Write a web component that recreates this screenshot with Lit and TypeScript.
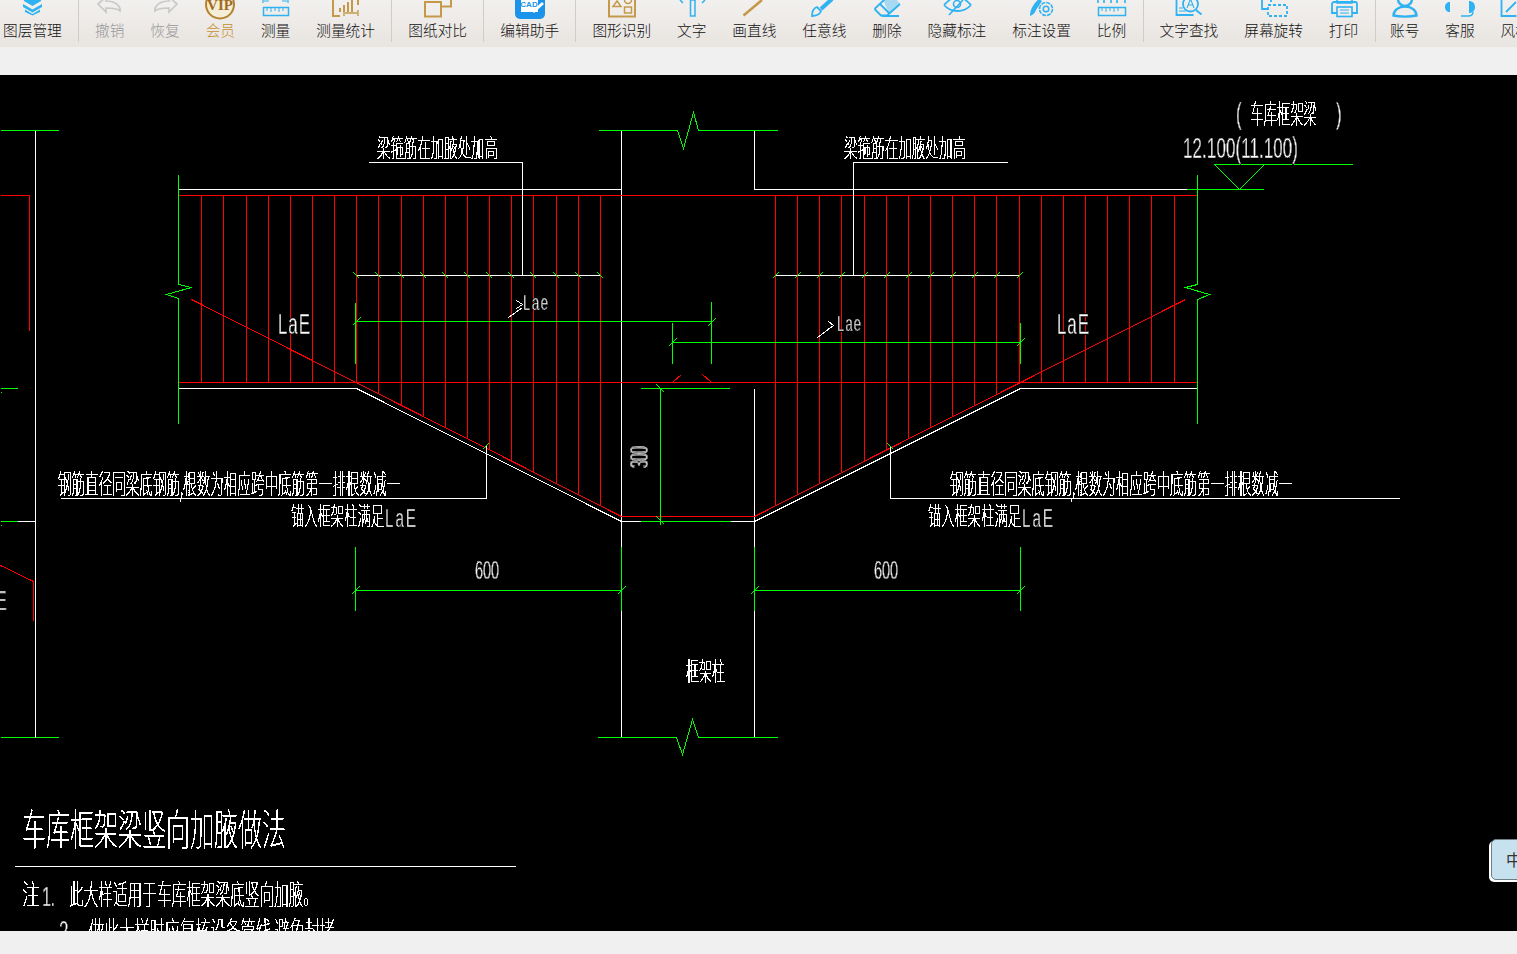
import { LitElement, html, svg, css } from "lit";
import { customElement } from "lit/decorators.js";

const B = "#2fb2f2";
const G = "#c49a4a";
const H = "#c9c9c9";

type Item = { label: string; cx: number; tone?: string; icon: unknown };

const ruler = (a: number, b: number) => svg`
  <rect x=${a + 0.5} y="7.5" width=${b - a - 1} height="8" fill="none" stroke=${B} stroke-width="1.5"/>
  <path d="M${a + 4} 8v3M${a + 8} 8v4M${a + 12} 8v3M${a + 16} 8v4M${a + 20} 8v3" stroke=${B} stroke-width="1"/>`;

const groups: Item[][] = [
  [{ label: "图层管理", cx: 32, icon: svg`<g fill=${B}><path d="M24 -2h17v3l-8.500 5-8.500-5z"/><path d="M23 4l9.500 5.500L42 4v3l-9.500 5.500L23 7z"/><path d="M25 9.500l7.500 4.500 7.500-4.500v2.500l-7.500 3.500-7.500-3.500z"/></g>` }],
  [
    { label: "撤销", tone: "off", cx: 109, icon: svg`<path d="M97 4l8-7v4c9 0 15 5 14 10-3-3-8-3-14-3v4z" fill="none" stroke=${H} stroke-width="1.700"/>` },
    { label: "恢复", tone: "off", cx: 164, icon: svg`<path d="M176 4l-8-7v4c-9 0-15 5-14 10 3-3 8-3 14-3v4z" fill="none" stroke=${H} stroke-width="1.700"/>` },
    { label: "会员", tone: "gold", cx: 220, icon: svg`<circle cx="220" cy="4.500" r="14" fill="#f4edd8" stroke="#b5822c" stroke-width="2"/><text x="220" y="10" text-anchor="middle" class="viptext">VIP</text>` },
    { label: "测量", cx: 275, icon: svg`${ruler(262, 288)}<path d="M262 0v3M287 0v3M263 1h5M281 1h5" stroke=${B} stroke-width="1.200"/>` },
    { label: "测量统计", cx: 345, icon: svg`<path d="M332 -1v17h7M357 -1v6" fill="none" stroke=${G} stroke-width="2"/><path d="M338 12h2V8h-2zM342 12h2V5h-2zM346 12h2V2h-2zM350 12h2V0h-2z" fill=${G}/><path d="M343 10v6M357 10v6M344 13h12" stroke=${G} stroke-width="1.400"/>` },
  ],
  [{ label: "图纸对比", cx: 437, icon: svg`<rect x="424" y="2" width="16" height="14.500" fill="none" stroke=${G} stroke-width="2"/><path d="M440 6.500h10V-3" fill="none" stroke=${G} stroke-width="2"/>` }],
  [{ label: "编辑助手", cx: 529, icon: svg`<path d="M514 -4h30v18a5 5 0 0 1-5 5h-20a5 5 0 0 1-5-5z" fill="#1b93ea"/><rect x="520" y="-2" width="17" height="14" fill="#fff"/><text x="528" y="7" text-anchor="middle" class="cad">CAD</text><path d="M542 3l-10 9" stroke="#fff" stroke-width="3"/>` }],
  [
    { label: "图形识别", cx: 621, icon: svg`<path d="M608 -2v18.500h26V-2" fill="none" stroke=${G} stroke-width="2"/><path d="M616 1l4 5.500h-8z" fill="none" stroke=${G} stroke-width="1.500"/><circle cx="627" cy="0" r="3.500" fill="none" stroke=${G} stroke-width="1.500"/><rect x="623.500" y="7" width="7" height="6" fill="none" stroke=${G} stroke-width="1.500"/>` },
    { label: "文字", cx: 691, icon: svg`<path d="M689.500 0h4.500v16h-4.500z" fill="none" stroke=${B} stroke-width="1.500"/><path d="M679 0l3 3M704 0l-3 3" stroke=${B} stroke-width="1.500"/>` },
    { label: "画直线", cx: 754, icon: svg`<path d="M743.500 15.500L762 0" stroke=${G} stroke-width="2.600"/>` },
    { label: "任意线", cx: 824, icon: svg`<path d="M821 9L832 -1" stroke=${B} stroke-width="4"/><path d="M812 16c0-5 2-8 5-9l4 4c-1 3-5 5-9 5z" fill="none" stroke=${B} stroke-width="1.800"/>` },
    { label: "删除", cx: 886, icon: svg`<path d="M882 0h14l3 4-11 9z" fill="#a8d9f3"/><path d="M873.500 9L884 -1M899 4L886 15.500H880L873.500 9M879 4l9 9M881 16h17" fill="none" stroke=${B} stroke-width="1.800"/>` },
    { label: "隐藏标注", cx: 956, icon: svg`<path d="M943 5c7 8 20 8 27 0M943 5c3-3 5-5 7-6M970 5c-3-3-5-5-7-6" fill="none" stroke=${B} stroke-width="1.800"/><circle cx="956" cy="4" r="3.500" fill="none" stroke=${B} stroke-width="1.600"/><path d="M948 15L962 0" stroke=${B} stroke-width="1.600"/>` },
    { label: "标注设置", cx: 1041, icon: svg`<path d="M1029 16c0-6 3-12 9-17l3 2-6 9c-1 3-3 5-6 6z" fill=${B}/><circle cx="1045" cy="9" r="6.500" fill="#eeebe8" stroke=${B} stroke-width="1.600" stroke-dasharray="4 1"/><circle cx="1045" cy="9" r="2.800" fill="none" stroke=${B} stroke-width="1.500"/>` },
    { label: "比例", cx: 1111, icon: svg`${ruler(1097, 1125)}<path d="M1097 0v3M1103 0v3M1110 0v3M1116 0v3M1124 0v3" stroke=${B} stroke-width="1.600"/>` },
  ],
  [
    { label: "文字查找", cx: 1188, icon: svg`<path d="M1175.500 -1v16h17" fill="none" stroke=${B} stroke-width="1.800"/><circle cx="1189.500" cy="4" r="7.500" fill="none" stroke=${B} stroke-width="1.800"/><path d="M1195 10l5.500 4.500" stroke=${B} stroke-width="2"/><path d="M1186 8l3.500-9 3.500 9M1187 5h5" fill="none" stroke=${B} stroke-width="1.100"/><path d="M1178 8h4M1178 11h7" stroke=${B} stroke-width="1"/>` },
    { label: "屏幕旋转", cx: 1273, icon: svg`<path d="M1261 -1v10h6M1270 -1v3" fill="none" stroke=${B} stroke-width="1.800"/><rect x="1267" y="5" width="19" height="11" fill="none" stroke=${B} stroke-width="1.800" stroke-dasharray="3 2"/>` },
    { label: "打印", cx: 1343, icon: svg`<path d="M1336 -1v4h15v-4" fill="none" stroke=${B} stroke-width="1.600"/><path d="M1336 13h-5V4c0-1 1-2 2-2h21c1 0 2 1 2 2v9h-5" fill="none" stroke=${B} stroke-width="1.800"/><rect x="1336" y="7" width="15" height="9.500" fill="none" stroke=${B} stroke-width="1.600"/><path d="M1339 10h9M1339 13h9" stroke=${B} stroke-width="1"/>` },
  ],
  [
    { label: "账号", cx: 1405, icon: svg`<circle cx="1405" cy="-1" r="7" fill="none" stroke=${B} stroke-width="2.500"/><path d="M1393.500 15.500c0-5 5-9 11.500-9s11.500 4 11.500 9c-6 1.500-17 1.500-23 0z" fill="none" stroke=${B} stroke-width="2.400"/>` },
    { label: "客服", cx: 1460, icon: svg`<path d="M1450 2c-3 0-5 2-5 5s2 5 5 5zM1469 1c3 0 6 2 6 6s-3 6-6 6z" fill=${B}/><path d="M1473 12c0 3-2 4-5 4h-7" fill="none" stroke=${B} stroke-width="1.500"/>` },
    { label: "风格", cx: 1515, icon: svg`<path d="M1501.500 -1v17h15" fill="none" stroke=${B} stroke-width="1.800"/><path d="M1506 12L1516 2" stroke=${B} stroke-width="1.800"/>` },
  ],
];

const ln = (c: string, ...p: number[]) => svg`<polyline class=${c} points=${p.join(" ")}/>`;

const cjk = (s: string, x0: number, x1: number, y0: number, y1: number) => {
  const fs = (y1 - y0) / 0.98;
  return svg`<text class="cjk" x=${x0} y=${y1 - fs * 0.1} font-size=${fs} textLength=${x1 - x0} lengthAdjust="spacingAndGlyphs">${s}</text>`;
};
const SX = 0.58;
const lat = (s: string, x0: number, x1: number, y0: number, y1: number) => {
  const fs = (y1 - y0) / 0.72;
  return svg`<text class="lat" transform="translate(${x0} ${y1}) scale(${SX} 1)" font-size=${fs} textLength=${(x1 - x0) / SX} lengthAdjust="spacing">${s}</text>`;
};

const slash = (x: number, y: number, r = 4) => ln("g", x - r, y + r, x + r, y - r);
const back = (x: number, y: number, r = 3) => ln("g", x - r, y - r, x + r, y + r);

const leftBars = [201, 223, 246, 268, 290, 312, 334, 356, 378, 401, 423, 445, 467, 489, 511, 533, 556, 578, 600];
const rightBars = [775, 797, 819, 841, 864, 886, 908, 930, 952, 974, 996, 1019, 1041, 1063, 1085, 1107, 1129, 1151, 1174];
const leftTicks = leftBars.filter((x) => x >= 356);
const rightTicks = rightBars.filter((x) => x <= 1019);

const drawing = svg`
  <defs>
    <filter id="crisp" x="0" y="0" width="100%" height="100%" color-interpolation-filters="sRGB">
      <feComponentTransfer><feFuncA type="discrete" tableValues="0 1 1 1 1"/></feComponentTransfer>
    </filter>
  </defs>
  <g transform="translate(.5 .5)">
    ${ln("r", 0, 195, 29, 195, 29, 330)}
    ${ln("g", 0, 130, 58, 130)}${ln("g", 0, 737, 58, 737)}
    ${ln("w", 35, 130, 35, 737)}
    ${ln("g", 0, 388, 17, 388)}${ln("g", 0, 392, 1, 392)}
    ${ln("g", 0, 521, 17, 521)}${ln("w", 17, 521, 35, 521)}${ln("g", 0, 525, 1, 525)}
    ${ln("r", 0, 565, 33, 581, 33, 620)}

    ${ln("w", 178, 189, 621, 189)}
    ${ln("w", 754, 130, 754, 189, 1186, 189)}
    ${ln("g", 1186, 189, 1263, 189)}
    ${ln("w", 178, 388, 356, 388, 621, 521, 754, 521, 1020, 388, 1197, 388)}
    ${ln("g", 640, 521, 730, 521)}
    ${ln("w", 621, 130, 621, 737)}${ln("w", 754, 388, 754, 737)}
    ${ln("r", 178, 195, 1197, 195)}

    ${leftBars.map((x) => ln("r", x, 195, x, x <= 356 ? 382 : Math.round(382 + (x - 356) * 0.5047)))}
    ${rightBars.map((x) => ln("r", x, 195, x, x >= 1019 ? 382 : Math.round(516 - (x - 754) * 0.504)))}
    ${ln("r", 178, 382, 1197, 382)}
    ${ln("r", 191, 299, 621, 516, 754, 516, 1020, 382, 1185, 299)}
    ${ln("r", 672, 382, 681, 374)}${ln("r", 702, 374, 711, 382)}

    ${ln("g", 598, 130, 677, 130, 683, 148, 693, 112, 698, 130, 777, 130)}
    ${ln("g", 597, 737, 676, 737, 682, 754, 692, 719, 698, 737, 777, 737)}
    ${ln("g", 178, 174, 178, 284, 191, 287, 166, 294, 178, 298, 178, 423)}
    ${ln("g", 1197, 174, 1197, 284, 1185, 287, 1209, 294, 1197, 299, 1197, 423)}

    ${ln("w", 368, 162, 522, 162, 522, 275)}
    ${ln("w", 356, 275, 600, 275)}
    ${ln("w", 1007, 162, 853, 162, 853, 275)}
    ${ln("w", 775, 275, 1019, 275)}
    ${leftTicks.map((x) => back(x, 275))}
    ${rightTicks.map((x) => slash(x, 275, 3))}

    ${ln("g", 355, 302, 355, 363)}${ln("g", 355, 321, 711, 321)}${ln("g", 711, 301, 711, 363)}
    ${slash(356, 321)}${slash(711, 322)}
    ${ln("g", 672, 322, 672, 363)}${ln("g", 672, 342, 1020, 342)}${ln("g", 1020, 322, 1020, 363)}
    ${slash(672, 342)}${slash(1020, 342)}
    ${ln("g", 640, 388, 729, 388)}${ln("g", 660, 388, 660, 524)}
    ${back(660, 388, 4)}${back(660, 520, 4)}

    ${ln("g", 1214, 164, 1352, 164)}${ln("g", 1214, 164, 1239, 189, 1264, 164)}

    ${ln("w", 486, 445, 486, 498, 60, 498)}${ln("w", 180, 498, 180, 501)}
    ${slash(485, 446, 3)}
    ${ln("w", 890, 445, 890, 498, 1399, 498)}${ln("w", 1071, 498, 1071, 501)}
    ${back(890, 446, 3)}

    ${ln("g", 355, 546, 355, 610)}${ln("g", 355, 590, 621, 590)}${ln("g", 621, 546, 621, 610)}
    ${slash(355, 590)}${slash(621, 590)}
    ${ln("g", 754, 546, 754, 610)}${ln("g", 754, 590, 1020, 590)}${ln("g", 1020, 546, 1020, 610)}
    ${slash(754, 590)}${slash(1020, 590)}

    ${ln("w", 508, 317, 522, 307)}${ln("w", 516, 300, 522, 304, 516, 308)}
    ${ln("w", 817, 337, 833, 325)}${ln("w", 828, 321, 833, 325, 826, 330)}
    ${ln("w", 14, 866, 515, 866)}
  </g>

  <g filter="url(#crisp)">
    ${cjk("梁箍筋在加腋处加高", 377, 498, 135, 160)}
    ${cjk("梁箍筋在加腋处加高", 844, 966, 135, 160)}
    ${cjk("车库框架梁", 1250, 1317, 100, 127)}
    ${lat("(", 1236, 1241, 103, 124)}${lat(")", 1336, 1342, 103, 124)}
    ${lat("12.100(11.100)", 1183, 1298, 137, 158)}
    ${lat("LaE", 278, 310, 313, 334)}
    ${lat("LaE", 1057, 1089, 313, 334)}
    ${lat("Lae", 523, 548, 294, 310)}
    ${lat("Lae", 837, 861, 315, 331)}
    ${cjk("钢筋直径同梁底钢筋,根数为相应跨中底筋第一排根数减一", 58, 400, 470, 497)}
    ${cjk("钢筋直径同梁底钢筋,根数为相应跨中底筋第一排根数减一", 950, 1292, 470, 497)}
    ${cjk("锚入框架柱满足", 291, 384, 503, 528)}${lat("LaE", 385, 416, 508, 527)}
    ${cjk("锚入框架柱满足", 928, 1021, 503, 528)}${lat("LaE", 1022, 1053, 508, 527)}
    ${lat("600", 475, 499, 561, 579)}
    ${lat("600", 874, 898, 561, 579)}
    <g transform="rotate(-90 649 468)">${lat("300", 649, 671, 449, 467)}</g>
    ${lat("E", -4, 8, 590, 610)}
    ${cjk("框架柱", 686, 725, 658, 684)}
    ${cjk("车库框架梁竖向加腋做法", 22, 286, 808, 849)}
    ${cjk("注", 22, 40, 880, 908)}${lat("1.", 42, 55, 886, 906)}
    ${cjk("此大样适用于车库框架梁底竖向加腋。", 69, 318, 880, 908)}
    ${lat("2.", 59, 78, 920, 941)}
    ${cjk("做此大样时应复核设备管线,避免封堵", 89, 335, 917, 945)}
  </g>
`;

@customElement("app-root")
export class AppRoot extends LitElement {
  static styles = css`
    :host {
      display: block;
      position: relative;
      height: 954px;
      overflow: hidden;
      background: #f0f0f0;
      font-family: "Noto Sans CJK SC", "Noto Sans", sans-serif;
    }
    .toolbar {
      display: flex;
      align-items: flex-start;
      height: 47px;
      padding-left: 3px;
      overflow: hidden;
      white-space: nowrap;
      background: linear-gradient(#f2f0ee, #e8e4e0);
    }
    .group {
      display: flex;
      gap: 25.9px;
      flex: none;
    }
    .sep {
      flex: none;
      width: 1px;
      height: 42px;
      margin: 0 16px 0 16.3px;
      background: #cfccc9;
    }
    .sep.tight {
      margin-right: 14.5px;
    }
    .item {
      display: flex;
      flex-direction: column;
      align-items: center;
    }
    .item svg {
      display: block;
      width: 40px;
      height: 20px;
      margin: 0 -10px;
      overflow: hidden;
    }
    .label {
      font-size: 14.7px;
      font-weight: 300;
      line-height: 20px;
      color: #111;
    }
    .label.off {
      color: #999;
    }
    .label.gold {
      color: #c48f2f;
    }
    .viptext {
      font: bold 15px "Liberation Serif", serif;
      fill: #a06c20;
    }
    .cad {
      font: bold 8px "Liberation Sans", sans-serif;
      fill: #1b93ea;
    }
    .strip {
      height: 28px;
    }
    .canvas {
      display: block;
      width: 1517px;
      height: 856px;
      background: #000;
    }
    .canvas polyline {
      fill: none;
      stroke-width: 1;
      shape-rendering: crispEdges;
    }
    .canvas .w {
      stroke: #fff;
    }
    .canvas .g {
      stroke: #00ff00;
    }
    .canvas .r {
      stroke: #ff0000;
    }
    .cjk {
      font-family: "Noto Sans CJK SC", sans-serif;
      font-weight: 100;
      fill: #fff;
    }
    .lat {
      font-family: "Liberation Sans", sans-serif;
      fill: #fff;
      stroke: #000;
      stroke-width: 0.6px;
    }
    .chip {
      position: absolute;
      top: 839px;
      left: 1491px;
      width: 40px;
      height: 41px;
      box-sizing: border-box;
      border: 1px solid #6f7f86;
      border-radius: 5px;
      background: #c6e2ee;
      box-shadow: -2px 2px 0 #fff;
      padding-left: 14px;
      font-size: 16px;
      line-height: 39px;
      color: #333;
    }
  `;

  private renderItem(it: Item) {
    return html`<div class="item">
      <svg viewBox="${it.cx - 20} 0 40 20">${it.icon}</svg>
      <span class="label ${it.tone ?? ""}">${it.label}</span>
    </div>`;
  }

  render() {
    return html`
      <div class="toolbar">
        ${groups.map(
          (g, i) => html`
            ${i > 0 ? html`<span class="sep ${i === groups.length - 1 ? "tight" : ""}"></span>` : ""}
            <div class="group">${g.map((it) => this.renderItem(it))}</div>
          `
        )}
      </div>
      <div class="strip"></div>
      <svg class="canvas" viewBox="0 75 1517 856">${drawing}</svg>
      <div class="chip">中</div>
    `;
  }
}
